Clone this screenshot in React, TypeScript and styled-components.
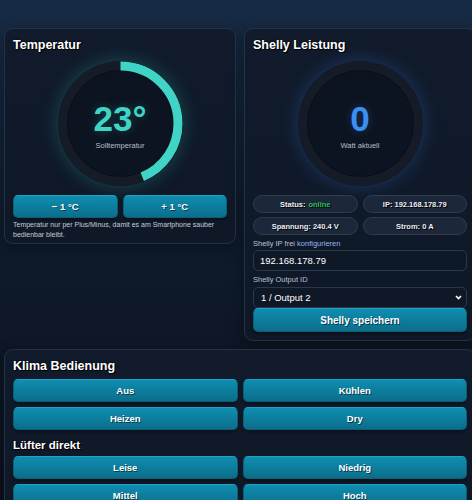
import React, { useState } from "react";
import styled, { createGlobalStyle } from "styled-components";

const GlobalStyle = createGlobalStyle`
  html, body {
    margin: 0;
    padding: 0;
    overflow: hidden;
  }
  body {
    background: linear-gradient(180deg, #172b45 0%, #0f1b2c 45%, #0b111c 100%);
    min-height: 100vh;
    font-family: "Liberation Sans", Arial, sans-serif;
    color: #e8eef6;
  }
`;

const Page = styled.div`
  width: 476px;
  padding: 28px 0 0 4px;
  display: grid;
  grid-template-columns: 232px 232px;
  column-gap: 8px;
  row-gap: 8px;
  align-items: start;
`;

const Card = styled.section<{ $wide?: boolean }>`
  grid-column: ${(p) => (p.$wide ? "1 / span 2" : "auto")};
  background: linear-gradient(180deg, #111b2b 0%, #0f1827 100%);
  border: 1px solid #243247;
  border-radius: 9px;
  padding: 8px;
  box-shadow: 0 4px 14px rgba(0, 0, 0, 0.35);
`;

const Title = styled.h2<{ $gap?: number }>`
  margin: 0 0 ${(p) => p.$gap ?? 8}px;
  font-size: 12.5px;
  line-height: 16px;
  font-weight: 700;
  color: #ffffff;
  text-shadow: 1px 1px 0 #000, 0 0 2px #000;
`;

const SubTitle = styled.h3`
  margin: 7px 0 3px;
  font-size: 11.5px;
  line-height: 16px;
  font-weight: 700;
  color: #ffffff;
  text-shadow: 1px 1px 0 #000, 0 0 2px #000;
`;

const GaugeWrap = styled.div`
  position: relative;
  width: 125px;
  height: 125px;
  margin: 0 auto;
`;

const GaugeSvg = styled.svg<{ $glow: string }>`
  display: block;
  width: 125px;
  height: 125px;
  border-radius: 50%;
  box-shadow: 0 0 18px ${(p) => p.$glow};
`;

const GaugeCenter = styled.div`
  position: absolute;
  inset: 0;
  display: flex;
  flex-direction: column;
  align-items: center;
  justify-content: center;
  padding-top: 4px;
`;

const BigValue = styled.div<{ $color: string; $glow: string }>`
  font-size: 35px;
  line-height: 34px;
  font-weight: 700;
  color: ${(p) => p.$color};
  text-shadow: 0 0 10px ${(p) => p.$glow};
`;

const GaugeLabel = styled.div`
  margin-top: 5px;
  font-size: 7.5px;
  color: #b4bfcd;
`;

const ButtonRow = styled.div<{ $top?: number }>`
  display: grid;
  grid-template-columns: 1fr 1fr;
  gap: 5px;
  margin-top: ${(p) => p.$top ?? 0}px;
`;

const ActionButton = styled.button`
  height: 23px;
  width: 100%;
  border: 1px solid #0b5f78;
  border-top-color: #1fa2c4;
  border-radius: 5px;
  background: linear-gradient(180deg, #0f8db0 0%, #0b6e8b 100%);
  color: #ffffff;
  font-family: "Liberation Sans", Arial, sans-serif;
  font-size: 9.5px;
  font-weight: 700;
  text-shadow: 1px 1px 0 rgba(0, 0, 0, 0.55);
  box-shadow: 0 2px 3px rgba(0, 0, 0, 0.35);
  cursor: pointer;
  padding: 0;
`;

const SaveButton = styled(ActionButton)`
  display: block;
  height: 24px;
  font-size: 10px;
`;

const Note = styled.p`
  margin: 2px 0 -5px;
  font-size: 7px;
  line-height: 10px;
  color: #c3ccd8;
`;

const ChipGrid = styled.div`
  display: grid;
  grid-template-columns: 1fr 1fr;
  gap: 4px 5px;
  margin-top: 9px;
`;

const Chip = styled.div`
  height: 18px;
  border-radius: 9px;
  background: #1c2739;
  border: 1px solid #2d3b51;
  box-sizing: border-box;
  display: flex;
  align-items: center;
  justify-content: center;
  font-size: 7.5px;
  font-weight: 700;
  color: #e9eef5;
  text-shadow: 1px 1px 0 #000;
`;

const Online = styled.span`
  margin-left: 3px;
  color: #22c55e;
`;

const FieldLabel = styled.label`
  display: block;
  margin-top: 3px;
  font-size: 7.5px;
  line-height: 11px;
  color: #b9c3d0;
`;

const LinkWord = styled.span`
  color: #8fb8f0;
`;

const TextInput = styled.input`
  display: block;
  box-sizing: border-box;
  width: 100%;
  height: 21px;
  margin-top: 1px;
  padding: 0 6px;
  background: #0f1826;
  border: 1px solid #2a384c;
  border-radius: 5px;
  color: #ffffff;
  font-family: "Liberation Sans", Arial, sans-serif;
  font-size: 9.5px;
  outline: none;
`;

const SelectBox = styled.div`
  position: relative;
  margin-top: 2px;
`;

const Select = styled.select`
  display: block;
  box-sizing: border-box;
  width: 100%;
  height: 21px;
  padding: 0 7px;
  appearance: none;
  background: #0f1826;
  border: 1px solid #2a384c;
  border-radius: 5px;
  color: #ffffff;
  font-family: "Liberation Sans", Arial, sans-serif;
  font-size: 9.5px;
  outline: none;
`;

const Chevron = styled.svg`
  position: absolute;
  right: 5px;
  top: 8px;
  width: 7px;
  height: 5px;
  pointer-events: none;
`;

type GaugeProps = {
  value: string;
  label: string;
  progress: number;
  color: string;
  glow: string;
};

function Gauge({ value, label, progress, color, glow }: GaugeProps) {
  const r = 57.5;
  const c = 2 * Math.PI * r;
  return (
    <GaugeWrap>
      <GaugeSvg viewBox="0 0 125 125" $glow={glow}>
        <circle cx="62.5" cy="62.5" r="62" fill="#151c28" />
        <circle cx="62.5" cy="62.5" r="53" fill="#0d1421" stroke="#0a0f18" strokeWidth="1" />
        {progress > 0 && (
          <circle
            cx="62.5"
            cy="62.5"
            r={r}
            fill="none"
            stroke={color}
            strokeWidth="9"
            strokeDasharray={`${c * progress} ${c}`}
            transform="rotate(-90 62.5 62.5)"
          />
        )}
      </GaugeSvg>
      <GaugeCenter>
        <BigValue $color={color} $glow={glow}>{value}</BigValue>
        <GaugeLabel>{label}</GaugeLabel>
      </GaugeCenter>
    </GaugeWrap>
  );
}

export default function App() {
  const [temp, setTemp] = useState(23);
  const [ip, setIp] = useState("192.168.178.79");
  const [output, setOutput] = useState("2");
  // Skala 16..32 °C
  const progress = Math.min(1, Math.max(0, (temp - 16) / 16));

  return (
    <>
      <GlobalStyle />
      <Page>
        <Card>
          <Title>Temperatur</Title>
          <Gauge
            value={`${temp}°`}
            label="Solltemperatur"
            progress={progress}
            color="#3fd4c5"
            glow="rgba(45, 212, 191, 0.28)"
          />
          <ButtonRow $top={9}>
            <ActionButton onClick={() => setTemp(temp - 1)}>− 1 °C</ActionButton>
            <ActionButton onClick={() => setTemp(temp + 1)}>+ 1 °C</ActionButton>
          </ButtonRow>
          <Note>
            Temperatur nur per Plus/Minus, damit es am Smartphone sauber
            bedienbar bleibt.
          </Note>
        </Card>

        <Card>
          <Title>Shelly Leistung</Title>
          <Gauge
            value="0"
            label="Watt aktuell"
            progress={0}
            color="#3b8ff3"
            glow="rgba(59, 130, 246, 0.3)"
          />
          <ChipGrid>
            <Chip>
              Status:<Online>online</Online>
            </Chip>
            <Chip>IP: 192.168.178.79</Chip>
            <Chip>Spannung: 240.4 V</Chip>
            <Chip>Strom: 0 A</Chip>
          </ChipGrid>
          <FieldLabel>
            Shelly IP frei <LinkWord>konfigurieren</LinkWord>
          </FieldLabel>
          <TextInput value={ip} onChange={(e) => setIp(e.target.value)} />
          <FieldLabel>Shelly Output ID</FieldLabel>
          <SelectBox>
            <Select value={output} onChange={(e) => setOutput(e.target.value)}>
              <option value="0">0 / Output 1</option>
              <option value="2">1 / Output 2</option>
            </Select>
            <Chevron viewBox="0 0 7 5">
              <path d="M1 1 L3.5 3.5 L6 1" fill="none" stroke="#ffffff" strokeWidth="1.6" />
            </Chevron>
          </SelectBox>
          <SaveButton>Shelly speichern</SaveButton>
        </Card>

        <Card $wide>
          <Title $gap={5}>Klima Bedienung</Title>
          <ButtonRow>
            <ActionButton>Aus</ActionButton>
            <ActionButton>Kühlen</ActionButton>
          </ButtonRow>
          <ButtonRow $top={5}>
            <ActionButton>Heizen</ActionButton>
            <ActionButton>Dry</ActionButton>
          </ButtonRow>
          <SubTitle>Lüfter direkt</SubTitle>
          <ButtonRow>
            <ActionButton>Leise</ActionButton>
            <ActionButton>Niedrig</ActionButton>
          </ButtonRow>
          <ButtonRow $top={5}>
            <ActionButton>Mittel</ActionButton>
            <ActionButton>Hoch</ActionButton>
          </ButtonRow>
        </Card>
      </Page>
    </>
  );
}
